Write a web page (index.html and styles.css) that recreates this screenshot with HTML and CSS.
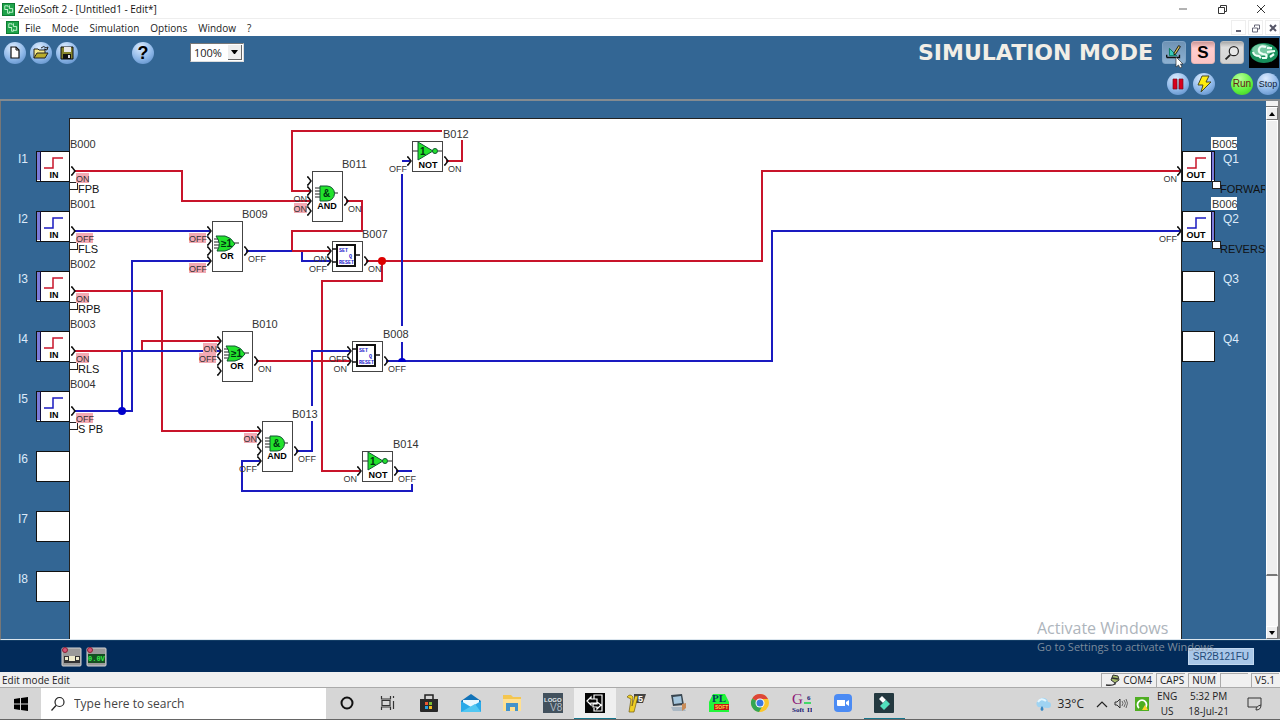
FILE: index.html
```html
<!DOCTYPE html>
<html lang="en">
<head>
<meta charset="utf-8">
<title>ZelioSoft 2 - [Untitled1 - Edit*]</title>
<link rel="stylesheet" href="styles.css">
</head>
<body>
<svg class="defs" aria-hidden="true">
  <defs>
    <symbol id="zelio" viewBox="0 0 14 14"><rect width="14" height="14" fill="#1fa34a"/><rect x=".5" y=".5" width="13" height="13" fill="none" stroke="#0c7a30"/><path d="M6.500 4.500V3H3v4h3.500M8 2.500V6h3.500v4H8M3 7l3 0v4h2V9" fill="none" stroke="#c8f5d2"/></symbol>
    <symbol id="pin" viewBox="0 0 6 10" overflow="visible"><path d="M0 1h1l3 4-3 4H0" class="ink2"/></symbol>
    <symbol id="orshape" viewBox="0 0 30 20" overflow="visible"><path d="M2 6h7M2 9h7M2 12h7M2 15h7M22 10h5" class="ink"/><path d="M4 3h9q6 1 10 8q-4 6-10 7H5q5-7-1-15z" class="green"/><text x="9" y="14" class="gsym">≥1</text></symbol>
    <symbol id="andshape" viewBox="0 0 30 20" overflow="visible"><path d="M3 5h6M3 8h6M3 11h6M3 14h6M21 10h5" class="ink"/><path d="M8 3h7a7 7 0 0 1 0 15H8z" class="green"/><text x="11" y="14" class="gsym">&amp;</text></symbol>
    <symbol id="notgate" viewBox="0 0 30 30" overflow="visible"><rect width="30" height="30" class="box"/><path d="M1 10h5M26 10h4" class="ink"/><path d="M6 1v18L21 10z" class="green"/><circle cx="23" cy="10" r="2.500" class="green"/><text x="8" y="14" class="gsym">1</text><text x="16" y="27" class="gate">NOT</text><use href="#pin" x="-5" y="15" width="6" height="10"/><use href="#pin" x="32" y="15" width="6" height="10"/></symbol>
    <symbol id="orgate" viewBox="0 0 30 50" overflow="visible"><rect width="30" height="50" class="box"/><use href="#orshape" y="12" width="30" height="20"/><text x="15" y="38" class="gate">OR</text><use href="#pins4"/></symbol>
    <symbol id="andgate" viewBox="0 0 30 50" overflow="visible"><rect width="30" height="50" class="box"/><use href="#andshape" y="12" width="30" height="20"/><text x="15" y="38" class="gate">AND</text><use href="#pins4"/></symbol>
    <g id="pins4"><use href="#pin" x="-5" y="5" width="6" height="10"/><use href="#pin" x="-5" y="15" width="6" height="10"/><use href="#pin" x="-5" y="25" width="6" height="10"/><use href="#pin" x="-5" y="35" width="6" height="10"/><use href="#pin" x="32" y="25" width="6" height="10"/></g>
    <symbol id="latch" viewBox="0 0 30 30" overflow="visible"><rect width="30" height="30" class="box"/><path d="M0 8h5M0 21h5M24 14h4" class="ink2"/><rect x="5" y="4" width="18" height="21" class="frame"/><text x="7" y="11" class="tiny">SET</text><text x="17" y="17" class="tiny">Q</text><text x="7" y="23" class="tiny">RESET</text><use href="#pin" x="-5" y="5" width="6" height="10"/><use href="#pin" x="-5" y="15" width="6" height="10"/><use href="#pin" x="32" y="15" width="6" height="10"/></symbol>
    <symbol id="input" viewBox="0 0 50 40" overflow="visible"><rect width="33" height="30" class="slot"/><rect x="1" y="1" width="3" height="28" fill="#7c7ad8"/><path d="M4 0v30" class="navyline"/><path d="M8 17h9V7h10" class="step"/><text x="18" y="27" class="gate">IN</text><rect x="33" y="31" width="8" height="7" class="note"/><use href="#pin" x="35" y="15" width="6" height="10"/></symbol>
    <symbol id="output" viewBox="0 0 50 40" overflow="visible"><rect width="32" height="30" class="slot"/><rect x="29" y="1" width="3" height="28" fill="#7c7ad8"/><path d="M29 0v30" class="navyline"/><path d="M5 17h9V7h10" class="step"/><text x="14" y="27" class="gate">OUT</text><rect x="30" y="30" width="8" height="7" class="note"/><use href="#pin" x="-5" y="15" width="6" height="10"/></symbol>
  </defs>
</svg>

<header class="titlebar">
  <svg class="appicon"><use href="#zelio"/></svg>
  <h1 class="title">ZelioSoft 2 - [Untitled1 - Edit*]</h1>
  <div class="winbtns">
    <button aria-label="Minimize"><svg width="12" height="12"><path d="M2 6h8" stroke="#666" fill="none"/></svg></button>
    <button aria-label="Restore"><svg width="12" height="12"><path d="M2.500 4.500h6v6h-6zM4.500 4V2.500h6v6H9" stroke="#333" fill="none"/></svg></button>
    <button aria-label="Close"><svg width="12" height="12"><path d="M2 2l8 8M10 2l-8 8" stroke="#333" fill="none"/></svg></button>
  </div>
</header>

<nav class="menubar">
  <svg class="appicon"><use href="#zelio"/></svg>
  <button>File</button><button>Mode</button><button>Simulation</button><button>Options</button><button>Window</button><button>?</button>
  <div class="docbtns">
    <button aria-label="Minimize document"><svg width="10" height="10"><path d="M2 8h5" stroke="#667" stroke-width="2"/></svg></button>
    <button aria-label="Restore document"><svg width="10" height="10"><path d="M1.500 5h5v4h-5zM3.500 4V2h5v4H7" stroke="#667" fill="none"/></svg></button>
    <button aria-label="Close document"><svg width="10" height="10"><path d="M2 2l6 6M8 2L2 8" stroke="#556" stroke-width="2"/></svg></button>
  </div>
</nav>

<div class="toolbar">
  <div class="toolrow">
    <div class="filetools">
      <button class="round" aria-label="New"><svg viewBox="0 0 22 22"><path d="M7 5h5l3 3v8H7z" fill="#fff" stroke="#111" stroke-width="1.200"/><path d="M12 5v3h3" fill="none" stroke="#111"/></svg></button>
      <button class="round" aria-label="Open"><svg viewBox="0 0 22 22"><path d="M4 16V7h4l1 1h6v3" fill="#f5e98a" stroke="#222"/><path d="M4 16l3-5h11l-3 5z" fill="#b9ac2c" stroke="#222"/><path d="M11 6q3-3 5 0l2-1-1 3-3-1" fill="none" stroke="#222"/></svg></button>
      <button class="round" aria-label="Save"><svg viewBox="0 0 22 22"><path d="M5 5h12v12H5z" fill="#85832a" stroke="#111"/><path d="M8 5h7v5H8z" fill="#e8e8e8"/><path d="M7 12h8v5H7z" fill="#111"/><path d="M12 13h2v3h-2z" fill="#ddd"/></svg></button>
    </div>
    <button class="round help" aria-label="Help">?</button>
    <label class="zoom"><select aria-label="Zoom"><option>100%</option></select><span class="arrow"><svg width="7" height="4"><path d="M0 0h7L4 4H3z"/></svg></span></label>
    <div class="modes">
      <h2 class="mode">SIMULATION MODE</h2>
      <button class="square active" aria-label="Edit mode"><svg viewBox="0 0 24 23"><path d="M7 7l8 8H7z" fill="#38c9ba" stroke="#075"/><path d="M4 17h14v-3M4 14v3" fill="none" stroke="#111" stroke-width="1.500"/><path d="M17 4l2 1-5 8-2 1V12z" fill="#d9c454" stroke="#111"/></svg>
        <svg class="cursor" viewBox="0 0 9 13"><path d="M1 1v10l2.500-2L5 12l2-1-1.500-3H8z" fill="#fff" stroke="#333" stroke-width=".7"/></svg></button>
      <button class="square sim">S</button>
      <button class="square" aria-label="Monitoring"><svg viewBox="0 0 24 23"><circle cx="14" cy="10" r="5" fill="#e8e8e8" stroke="#222" stroke-width="1.300"/><path d="M10 14l-5 5" stroke="#222" stroke-width="2"/></svg></button>
      <svg class="brand" viewBox="0 0 30 30" role="img" aria-label="Schneider Electric"><rect width="30" height="30"/><ellipse cx="15" cy="15" rx="14" ry="10" fill="#178f5c"/><ellipse cx="13" cy="12" rx="10" ry="6" fill="#77c9a3"/><path d="M17 9q-6-2-7 2t4 5q5 0 3 4h-4M4 14q1 4 6 4l2 2M18 10h5M18 14l8-1M21 19l4-3" fill="none" stroke="#eefff7" stroke-width="2.200"/></svg>
    </div>
  </div>
  <div class="toolrow simrow">
    <button class="round" aria-label="Pause"><svg viewBox="0 0 22 22"><path d="M6 6h4v10H6zM12 6h4v10h-4z" fill="#d8001c" stroke="#75101c" stroke-width=".7"/></svg></button>
    <button class="round" aria-label="Power failure"><svg viewBox="0 0 22 22"><path d="M9 3h7l-3 6h5L8 19l2-7H5z" fill="#ffed10" stroke="#4a4a20"/></svg></button>
    <button class="round run">Run</button>
    <button class="round stop">Stop</button>
  </div>
</div>

<main class="workspace">
  <div class="canvas">
  <svg class="diagram" width="1264" height="538" viewBox="1 101 1264 538" role="img" aria-label="Function block diagram">
    <rect x="69" y="118" width="1112" height="540" class="sheet"/>
    <g class="wire red">
      <path d="M74 171H182V201H310M74 291H162V431H260M74 351H142V341H220M346 201H362V231H292V251H330M446 161H462V140M442 131H292V191H310M366 261H762V171H1180M382 261V281H322V471H360M256 361H350"/>
    </g>
    <g class="wire blue">
      <path d="M74 231H210M74 411H132V261H210M122 411V351H220M246 251H292M302 252V261H330M296 451H312V421M312 406V351H350M396 471H412M412 484V491H242V461H260M386 361H772V231H1180M402 361V342M402 326V174M402 161H410"/>
    </g>
    <circle cx="382" cy="261" r="4" fill="#d00"/><circle cx="122" cy="411" r="4" fill="#00c"/><path d="M398 362a4 4 0 0 1 8 0z" fill="#00c"/>

    <g class="on"><use href="#input" x="36" y="151" width="50" height="40"/><use href="#input" x="36" y="271" width="50" height="40"/><use href="#input" x="36" y="331" width="50" height="40"/><use href="#output" x="1182" y="151" width="50" height="40"/></g>
    <g class="off"><use href="#input" x="36" y="211" width="50" height="40"/><use href="#input" x="36" y="391" width="50" height="40"/><use href="#output" x="1182" y="211" width="50" height="40"/></g>
    <g class="slot"><rect x="36" y="451" width="33" height="30"/><rect x="36" y="511" width="33" height="30"/><rect x="36" y="571" width="33" height="30"/><rect x="1182" y="271" width="32" height="30"/><rect x="1182" y="331" width="32" height="30"/></g>

    <use href="#andgate" x="312" y="171" width="30" height="50"/>
    <use href="#orgate" x="212" y="221" width="30" height="50"/>
    <use href="#orgate" x="222" y="331" width="30" height="50"/>
    <use href="#andgate" x="262" y="421" width="30" height="50"/>
    <use href="#notgate" x="412" y="141" width="30" height="30"/>
    <use href="#notgate" x="362" y="451" width="30" height="30"/>
    <use href="#latch" x="332" y="241" width="30" height="30"/>
    <use href="#latch" x="352" y="341" width="30" height="30"/>

    <g class="port">
      <text x="18" y="163">I1</text><text x="18" y="223">I2</text><text x="18" y="283">I3</text><text x="18" y="343">I4</text><text x="18" y="403">I5</text><text x="18" y="463">I6</text><text x="18" y="523">I7</text><text x="18" y="583">I8</text>
      <text x="1223" y="163">Q1</text><text x="1223" y="223">Q2</text><text x="1223" y="283">Q3</text><text x="1223" y="343">Q4</text>
    </g>
    <g fill="#fff"><rect x="1211" y="137" width="26" height="13"/><rect x="1211" y="197" width="26" height="13"/></g>
    <g class="name">
      <text x="70" y="148">B000</text><text x="70" y="208">B001</text><text x="70" y="268">B002</text><text x="70" y="328">B003</text><text x="70" y="388">B004</text>
      <text x="1212" y="148">B005</text><text x="1212" y="208">B006</text>
      <text x="362" y="238">B007</text><text x="383" y="338">B008</text><text x="242" y="218">B009</text><text x="252" y="328">B010</text><text x="342" y="168">B011</text><text x="443" y="138">B012</text><text x="292" y="418">B013</text><text x="393" y="448">B014</text>
    </g>
    <g class="tag">
      <rect x="76" y="173" width="13" height="10"/><rect x="76" y="233" width="17" height="10"/><rect x="76" y="293" width="13" height="10"/><rect x="76" y="353" width="13" height="10"/><rect x="76" y="413" width="17" height="10"/>
      <rect x="189" y="233" width="17" height="10"/><rect x="189" y="263" width="17" height="10"/><rect x="294" y="203" width="13" height="10"/><rect x="203" y="343" width="14" height="10"/><rect x="199" y="353" width="17" height="10"/><rect x="244" y="433" width="13" height="10"/>
    </g>
    <g class="comment">
      <text x="78" y="193">FPB</text><text x="78" y="253">FLS</text><text x="78" y="313">RPB</text><text x="78" y="373">RLS</text><text x="78" y="433">S PB</text>
      <text x="1220" y="193">FORWARD</text><text x="1220" y="253">REVERSE</text>
    </g>
    <g class="state">
      <text x="76" y="182">ON</text><text x="76" y="242">OFF</text><text x="76" y="302">ON</text><text x="76" y="362">ON</text><text x="76" y="422">OFF</text>
      <text x="348" y="212">ON</text><text x="248" y="262">OFF</text><text x="368" y="272">ON</text><text x="448" y="172">ON</text><text x="258" y="372">ON</text><text x="388" y="372">OFF</text><text x="298" y="462">OFF</text><text x="398" y="482">OFF</text>
    </g>
    <g class="state end">
      <text x="207" y="242">OFF</text><text x="207" y="272">OFF</text><text x="307" y="202">ON</text><text x="307" y="212">ON</text><text x="407" y="172">OFF</text><text x="327" y="262">ON</text><text x="327" y="272">OFF</text><text x="217" y="352">ON</text><text x="217" y="362">OFF</text><text x="347" y="362">OFF</text><text x="347" y="372">ON</text><text x="257" y="442">ON</text><text x="257" y="472">OFF</text><text x="357" y="482">ON</text><text x="1177" y="182">ON</text><text x="1177" y="242">OFF</text>
    </g>
  </svg>
  </div>
  <div class="scrollbar">
    <span class="splitter"></span>
    <button aria-label="Scroll up"><svg width="6" height="4"><path d="M0 4h6L3 0z"/></svg></button>
    <span class="thumb"></span>
    <span class="track"></span>
    <button aria-label="Scroll down"><svg width="6" height="4"><path d="M0 0h6L3 4z"/></svg></button>
  </div>
</main>

<section class="modulebar">
  <button aria-label="Input and output states"><svg viewBox="0 0 21 20"><rect x="1" y="1" width="19" height="18" rx="1" fill="#9a9a9a" stroke="#d2d2d2"/><rect x="3" y="9" width="16" height="7" fill="#333"/><path d="M4 10h3v3H4zM8 9h6v5H8zM15 10h3v3h-3z" fill="#efeccd"/><circle cx="4" cy="3" r="2.500" fill="#d65578" stroke="#823"/></svg></button>
  <button aria-label="Front panel"><svg viewBox="0 0 21 20"><rect x="1" y="1" width="19" height="18" rx="1" fill="#9a9a9a" stroke="#d2d2d2"/><rect x="2" y="7" width="17" height="9" fill="#145021"/><text x="2" y="14" class="lcd">0.0V</text><circle cx="4" cy="3" r="2.500" fill="#d65578" stroke="#823"/></svg></button>
  <span class="model">SR2B121FU</span>
  <div class="activate"><p class="big">Activate Windows</p><p class="small">Go to Settings to activate Windows.</p></div>
</section>

<footer class="status">
  <span class="hint">Edit mode Edit</span>
  <span class="cell com"><svg width="16" height="13"><path d="M8 1l5 1 1 4-4 3-4-3z" fill="#a5ba6b" stroke="#333"/><path d="M7 4l6 1M10 9v1q-3 2-9 1" fill="none" stroke="#333" stroke-width="1.500"/></svg>COM4</span><span class="cell">CAPS</span><span class="cell">NUM</span><span class="cell"></span><span class="cell">V5.1</span>
</footer>

<div class="taskbar">
  <button class="start" aria-label="Start"><svg viewBox="0 0 14 14"><path d="M0 2l6-1v5.500H0zM7 1l7-1v6.500H7zM0 7.500h6V13l-6-1zM7 7.500h7V14l-7-1z"/></svg></button>
  <label class="search"><svg width="16" height="16"><circle cx="9.500" cy="6" r="4.500" fill="none" stroke="#222" stroke-width="1.200"/><path d="M6 9.500L1.500 14.500" stroke="#222" stroke-width="1.200"/></svg><input type="text" placeholder="Type here to search" aria-label="Search"></label>
  <div class="apps">
    <button aria-label="Cortana"><svg viewBox="0 0 20 20"><circle cx="10" cy="10" r="5.500" fill="none" stroke="#111" stroke-width="2"/></svg></button>
    <button aria-label="Task view"><svg viewBox="0 0 20 20"><path d="M3.500 3v3h9V3M3.500 17v-3h9v3M4 7.500h8v5H4zM15.500 3v2M15.500 8v8" fill="none" stroke="#333" stroke-width="1.200"/></svg></button>
    <button aria-label="Store"><svg viewBox="0 0 20 20"><path d="M6 6V2h8v4" fill="none" stroke="#222" stroke-width="1.500"/><path d="M1 6h18v12q0 1-1 1H2q-1 0-1-1z" fill="#292929"/><path d="M6 9h3v3H6z" fill="#ed5833"/><path d="M10 9h3v3h-3z" fill="#7cbd34"/><path d="M6 13h3v3H6z" fill="#25a1e2"/><path d="M10 13h3v3h-3z" fill="#f3bb20"/></svg></button>
    <button aria-label="Mail"><svg viewBox="0 0 20 20"><path d="M0 8l10-7 10 7v11H0z" fill="#1273b8"/><path d="M2 7h16v8H2z" fill="#e9f8ff"/><path d="M0 8l10 6 10-6v11H0z" fill="#29a9e8"/><path d="M0 19l14-8 6 8z" fill="#51c7f2"/></svg></button>
    <button aria-label="File Explorer"><svg viewBox="0 0 20 20"><path d="M1 2h8l2 2h8v13H1z" fill="#f4c650"/><path d="M1 6h18v12H1z" fill="#ffe092"/><path d="M4 18v-8h12v8h-3v-4H8v4z" fill="#4393ca"/></svg></button>
    <button aria-label="LOGO! V8"><svg viewBox="0 0 20 20"><rect width="20" height="20" fill="#42515d"/><text x="1" y="9" class="logo1">LOGO</text><text x="7" y="18" class="logo2">V8</text></svg></button>
    <button class="current" aria-label="ZelioSoft 2"><svg viewBox="0 0 20 20"><rect width="20" height="20" fill="#050505"/><path d="M9 6V2h8v16H9v-3M2 8l4-4v2h6v4H6v2zM16 12l-4-3v2H8v3h4v2z" fill="none" stroke="#fff" stroke-width="1.200"/></svg></button>
    <button aria-label="V5"><svg viewBox="0 0 20 20"><path d="M8 1h12l-3 9H8z" fill="#444"/><path d="M1 4q3-4 6 0l-1 9 3-10h3L8 19H3l2-13z" fill="#efcf25" stroke="#705b12" stroke-width=".7"/><text x="12" y="9" class="v5">5</text></svg></button>
    <button aria-label="PC tools"><svg viewBox="0 0 20 20"><path d="M3 2l11-1 2 11-11 1z" fill="#394650"/><path d="M5 4l8-1 1 7-8 1z" fill="#a5c6dd"/><path d="M3 14h12l3 4H5z" fill="#aab8c4"/><path d="M14 11l4-1v5l-4 3z" fill="#c88b57"/></svg></button>
    <button aria-label="PL Soft"><svg viewBox="0 0 20 20"><path d="M4 1h12l4 8v10H0V9z" fill="#21f53a"/><text x="3" y="9" class="pl">PL</text><rect x="5" y="11" width="15" height="6" fill="#c21818"/><text x="6" y="16" class="soft">SOFT</text></svg></button>
    <button aria-label="Chrome"><svg viewBox="0 0 20 20"><circle cx="10" cy="10" r="9" fill="#fac629"/><path d="M10 10L2.200 5.500A9 9 0 0 1 18 6H10z" fill="#dd4639"/><path d="M2.200 5.500A9 9 0 0 0 9 19l4-7-3-2z" fill="#33a653"/><circle cx="10" cy="10" r="4.500" fill="#fff"/><circle cx="10" cy="10" r="3.500" fill="#3b78df"/></svg></button>
    <button aria-label="G6 Soft II"><svg viewBox="0 0 20 20"><text x="0" y="11" class="gbig">G</text><text x="15" y="7" class="gsmall">6</text><text x="0" y="19" class="gsmall">Soft</text><text x="15" y="19" class="gsmall">II</text><path d="M12 10h7" stroke="#43d869" stroke-width="2"/></svg></button>
    <button aria-label="Zoom meetings"><svg viewBox="0 0 20 20"><rect x="1" y="1" width="18" height="18" rx="4" fill="#4b8bf4"/><path d="M4 7h8v6H5q-1 0-1-1zM13 9l3-2v6l-3-2z" fill="#fff"/></svg></button>
    <button class="running" aria-label="Filmora"><svg viewBox="0 0 20 20"><rect width="20" height="20" rx="1" fill="#243940"/><path d="M8 3l4 4-3 3-4-4z" fill="#fff"/><path d="M12 7l4 4-6 6-4-4z" fill="#52e0bc"/></svg></button>
  </div>
  <div class="tray">
    <svg class="weather" viewBox="0 0 18 16"><path d="M4 11a4 4 0 0 1 1-7 5 5 0 0 1 9 2 3 3 0 0 1 0 6z" fill="#9fd3f2"/><path d="M4 6q3-5 8-1" fill="none" stroke="#e4f6ff" stroke-width="2"/><path d="M8 10q3 4 0 5-3-1 0-5" fill="#3487c4"/></svg>
    <span class="temp">33°C</span>
    <svg width="12" height="8"><path d="M1 7l5-5 5 5" fill="none" stroke="#222" stroke-width="1.200"/></svg>
    <svg width="15" height="13"><path d="M1 5h2l3-3v9L3 8H1z" fill="none" stroke="#333"/><path d="M8 4q2 2 0 5M10 3q3 3 0 7M12 2q3 4 0 9" fill="none" stroke="#666"/></svg>
    <svg width="14" height="14"><rect width="14" height="14" fill="#4fae22"/><path d="M4 11a4.500 4.500 0 1 1 6 0" fill="none" stroke="#fff" stroke-width="1.800"/><path d="M7 13l3-5 3 5z" fill="#ffd42a"/></svg>
    <span class="duo"><span>ENG</span><span>US</span></span>
    <span class="duo clock"><span>5:32 PM</span><span>18-Jul-21</span></span>
    <svg class="notice" width="15" height="15"><path d="M10 11H1V2h13v7M9 14q0-4 5-5 0 5-5 5" fill="none" stroke="#333"/></svg>
  </div>
</div>
</body>
</html>
```

FILE: styles.css
```css
* { box-sizing: border-box; }
body {
  margin: 0; height: 100vh; display: flex; flex-direction: column; overflow: hidden;
  background: #336694; color: #222;
  font-family: "Open Sans", "Noto Sans", sans-serif; font-size: 10px; line-height: 14px;
}
button { border: 0; padding: 0; margin: 0; background: none; font: inherit; color: inherit; }
h1, h2, p { margin: 0; font-weight: 400; }
.defs { position: absolute; width: 0; height: 0; }

.titlebar { display: flex; align-items: center; height: 19px; padding-left: 2px; gap: 3px; background: #fff; flex: none; border-bottom: 1px solid #eee; }
.appicon { width: 13px; height: 13px; flex: none; }
.title { font-size: 10px; color: #111; }
.winbtns { margin-left: auto; display: flex; }
.winbtns button { width: 39px; height: 18px; display: grid; place-items: center; }

.menubar { display: flex; align-items: center; height: 17px; padding-left: 6px; background: #fff; flex: none; }
.menubar > button { margin-left: 6px; margin-right: 5px; }
.docbtns { margin-left: auto; display: flex; gap: 2px; }
.docbtns button { width: 15px; height: 15px; display: grid; place-items: center; border: 1px solid #eee; }

.toolbar { flex: none; background: #336694; border-bottom: 2px solid #858b90; padding: 1px 1px 0 4px; }
.toolrow { display: flex; align-items: center; height: 31px; }
.filetools { display: flex; gap: 4px; }
.round {
  width: 22px; height: 22px; border-radius: 50%; flex: none; display: grid; place-items: center;
  background: radial-gradient(circle at 40% 25%, #dcecff, #8db7e8 55%, #4f82be);
  font: 9px/12px "Liberation Sans", sans-serif; color: #123;
}
.round svg { width: 22px; height: 22px; display: block; }
.help { margin-left: 54px; font: bold 18px/20px "Liberation Sans", sans-serif; color: #000; }
.zoom { display: flex; position: relative; margin-left: 36px; width: 54px; height: 19px; border: 1px solid; border-color: #777 #ddd #ddd #777; background: #fff; }
.zoom select { appearance: none; width: 100%; border: 0; background: none; padding: 0 0 0 3px; font: 11px "Open Sans", sans-serif; color: #222; }
.arrow { position: absolute; right: 1px; top: 1px; bottom: 1px; width: 14px; display: grid; place-items: center; background: #eee; border-right: 1px solid #666; border-bottom: 1px solid #666; pointer-events: none; }
.modes { margin-left: auto; display: flex; align-items: center; gap: 5px; }
.mode { font: bold 22px/24px "DejaVu Sans", sans-serif; color: #f2eee6; margin-right: 4px; }
.square { position: relative; width: 24px; height: 23px; border-radius: 3px; background: linear-gradient(#aaa, #ddd 25%, #d2d2d2); border: 1px solid #bbb; font: bold 17px/20px "Liberation Sans", sans-serif; color: #000; }
.square svg { width: 22px; height: 21px; display: block; }
.active { background: linear-gradient(#6f93b5, #8db1d2); border-color: #7fa3c4; }
.sim { background: linear-gradient(#c99, #ffcdcd 30%, #fbc4c4); border-color: #e4b4b4; }
.square .cursor { position: absolute; left: 12px; top: 14px; width: 9px; height: 13px; z-index: 2; }
.brand { width: 30px; height: 30px; }
.simrow { justify-content: flex-end; gap: 4px; }
.run { background: radial-gradient(circle at 40% 25%, #b8ff9a, #5df03b 60%, #3abd24); color: #621; margin-left: 12px; font-size: 10px; }

.workspace { flex: 1; min-height: 0; display: flex; border-left: 1px solid #777; border-bottom: 1px solid #dce6ee; }
.canvas { flex: 1; min-width: 0; overflow: hidden; }
.diagram { display: block; font-family: "Liberation Sans", sans-serif; }
.sheet { fill: #fff; stroke: #222; shape-rendering: crispEdges; }
.wire { fill: none; stroke-width: 2; shape-rendering: crispEdges; }
.red { stroke: #c8142a; }
.blue { stroke: #1a1ac0; }
.ink { fill: none; stroke: #222; }
.ink2 { fill: none; stroke: #111; stroke-width: 1.5; }
.box { fill: #fff; stroke: #444; shape-rendering: crispEdges; }
.slot { fill: #fff; stroke: #111; shape-rendering: crispEdges; }
.note { fill: #fff; stroke: #222; shape-rendering: crispEdges; }
.navyline { stroke: #114; fill: none; shape-rendering: crispEdges; }
.green { fill: #22e32c; stroke: #153; }
.frame { fill: #fff; stroke: #111; stroke-width: 2; }
.step { fill: none; stroke: currentColor; stroke-width: 1.5; }
.on { color: #c8142a; }
.off { color: #1a1ac0; }
.gate { font: bold 9px "Liberation Sans", sans-serif; text-anchor: middle; fill: #000; stroke: none; }
.gsym { font: bold 10px "Liberation Sans", sans-serif; fill: #031; }
.tiny { font: bold 5px "Liberation Mono", monospace; fill: #22c; }
.port { font-size: 12px; fill: #dceafa; }
.name { font-size: 11px; fill: #333; }
.comment { font-size: 11px; fill: #111; }
.state { font-size: 9px; fill: #333; }
.end { text-anchor: end; }
.tag { fill: #f3aab4; }

.scrollbar { width: 14px; flex: none; display: flex; flex-direction: column; background: #eee; border-right: 2px solid #888; }
.splitter { height: 6px; background: #f2f2f2; border-bottom: 1px solid #777; }
.scrollbar button { height: 13px; display: grid; place-items: center; border: 1px solid #fff; border-right-color: #777; border-bottom-color: #777; background: #eee; }
.thumb { flex: 9; border: 1px solid #fff; border-bottom: 2px solid #777; background: #eee; }
.track { flex: 1; min-height: 46px; background: #f7f7f7; }

.modulebar { position: relative; flex: none; display: flex; align-items: center; gap: 4px; height: 32px; padding: 0 26px 0 61px; background: #022b5a; border-top: 1px solid #123d66; }
.modulebar button { width: 21px; height: 20px; }
.modulebar button svg { display: block; width: 21px; height: 20px; }
.lcd { font: bold 7px "Liberation Mono", monospace; fill: #38ef4a; }
.model { margin-left: auto; background: #a9c7e8; border: 1px solid #c2d8ef; padding: 0 4px; font: 10px/15px "Liberation Sans", sans-serif; color: #234a78; }
.activate { position: absolute; right: 56px; bottom: 17px; width: 187px; color: #9aa3ac; opacity: .8; pointer-events: none; white-space: nowrap; }
.big { font-size: 16px; line-height: 22px; }
.small { font-size: 11px; line-height: 16px; }

.status { flex: none; display: flex; height: 16px; align-items: stretch; gap: 3px; padding: 1px 1px 0 2px; background: #f0f0f0; border-bottom: 1px solid #aaa; font-size: 10px; line-height: 14px; }
.hint { margin-right: auto; }
.cell { min-width: 28px; padding: 0 1px 0 3px; border-left: 1px solid #aaa; border-top: 1px solid #aaa; line-height: 13px; }
.com { display: flex; gap: 2px; }

.taskbar { flex: none; height: 32px; display: flex; background: #d6d6d6; border-bottom: 1px solid #666; }
.start { width: 41px; display: grid; place-items: center; }
.start svg { width: 14px; height: 14px; }
.search { flex: 0 1 285px; display: flex; align-items: center; gap: 8px; padding-left: 9px; background: #fff; }
.search input { flex: 1; min-width: 0; border: 0; padding: 0; background: none; font: 12px "Open Sans", sans-serif; }
.search input::placeholder { color: #444; opacity: 1; }
.apps { flex: 0 1 579px; display: grid; grid-template-columns: repeat(14, 1fr); }
.apps button { display: grid; place-items: center; border-bottom: 1px solid transparent; }
.apps svg { width: 20px; height: 20px; }
.apps .current { background: #efefef; border-color: #17768c; }
.apps .running { border-color: #17768c; }
.logo1 { font: bold 6px "Liberation Sans", sans-serif; fill: #e4ebee; }
.logo2 { font: 10px "Liberation Sans", sans-serif; fill: #b0bbc4; }
.v5 { font: bold 9px "Liberation Sans", sans-serif; fill: #fff; }
.pl { font: bold 11px "Liberation Serif", serif; fill: #033c60; }
.soft { font: bold 5px "Liberation Sans", sans-serif; fill: #ffd83b; }
.gbig { font: 15px "Liberation Serif", serif; fill: #8d1777; }
.gsmall { font: bold 7px "Liberation Serif", serif; fill: #161672; }
.tray { margin-left: auto; display: flex; align-items: center; gap: 6px; padding-right: 18px; }
.weather { width: 18px; height: 16px; }
.temp { font-size: 12px; margin-right: 6px; }
.duo { display: grid; text-align: center; font-size: 10px; line-height: 15px; margin-left: 2px; }
.clock { margin-left: 5px; }
.notice { margin-left: 12px; }
```
